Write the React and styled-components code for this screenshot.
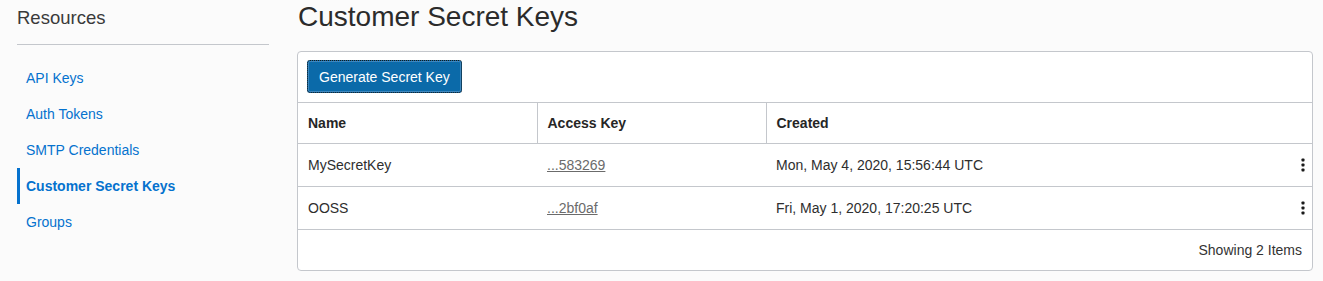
import React from 'react';
import styled, { createGlobalStyle } from 'styled-components';

const GlobalStyle = createGlobalStyle`
  html, body {
    margin: 0;
    padding: 0;
    background: #fbfbfb;
    font-family: "Liberation Sans", Arial, Helvetica, sans-serif;
    color: #333333;
  }
`;

const Page = styled.div`
  display: flex;
  gap: 28px;
  padding: 0 10px 0 17px;
`;

const Sidebar = styled.aside`
  width: 252px;
  flex: none;
`;

const SidebarTitle = styled.h2`
  margin: 0;
  padding-top: 6px;
  font-size: 18.5px;
  line-height: 24px;
  font-weight: 400;
  color: #3a3a3a;
`;

const Divider = styled.hr`
  margin: 14px 0 15px;
  border: 0;
  border-top: 1px solid #c4c7cc;
`;

const NavList = styled.ul`
  list-style: none;
  margin: 0;
  padding: 0;
`;

const NavItem = styled.li`
  display: flex;
  align-items: center;
  height: 36px;
  padding-left: 6px;
  border-left: 3px solid ${(p) => (p.$active ? '#0572ce' : 'transparent')};
  font-size: 14px;
  font-weight: ${(p) => (p.$active ? 700 : 400)};
  color: #0572ce;
`;

const Main = styled.main`
  flex: 1;
  min-width: 0;
`;

const Title = styled.h1`
  margin: 0 0 17px 1px;
  font-size: 28px;
  line-height: 34px;
  font-weight: 400;
  color: #2b2b2b;
`;

const Panel = styled.section`
  background: #ffffff;
  border: 1px solid #c4c7cc;
  border-radius: 4px;
  overflow: hidden;
`;

const Toolbar = styled.div`
  display: flex;
  padding: 8px 9px 9px;
`;

const Button = styled.button`
  height: 33px;
  padding: 0 11px;
  background: #0b6aa9;
  color: #ffffff;
  border: 1px dotted #1a1a1a;
  border-radius: 3px;
  box-shadow: inset 0 0 0 1px #3f87bd;
  font-family: inherit;
  font-size: 14px;
`;

const Table = styled.table`
  width: 100%;
  border-collapse: collapse;
  table-layout: fixed;
  font-size: 14px;
`;

const HeadCell = styled.th`
  height: 40px;
  padding: 0 10px;
  text-align: left;
  font-weight: 700;
  color: #262626;
  border-top: 1px solid #c4c7cc;
  border-bottom: 1px solid #c4c7cc;
  & + & {
    border-left: 1px solid #c4c7cc;
  }
`;

const Cell = styled.td`
  height: 42px;
  padding: 0 10px;
  color: #2e2e2e;
  border-bottom: 1px solid #c4c7cc;
`;

const CellInner = styled.div`
  display: flex;
  align-items: center;
  justify-content: space-between;
`;

const KeyLink = styled.a`
  color: #6b6b6b;
  text-decoration: underline;
`;

const Kebab = styled.button`
  display: flex;
  padding: 0;
  margin-right: -3px;
  border: 0;
  background: none;
`;

const Footer = styled.div`
  height: 40px;
  display: flex;
  align-items: center;
  justify-content: flex-end;
  padding: 0 10px;
  font-size: 14px;
  color: #333333;
`;

const KebabIcon = () => (
  <svg width="4" height="14" viewBox="0 0 4 14">
    <rect x="0.5" y="0.5" width="3" height="3" rx="0.8" fill="#1a1a1a" />
    <rect x="0.5" y="5.5" width="3" height="3" rx="0.8" fill="#1a1a1a" />
    <rect x="0.5" y="10.5" width="3" height="3" rx="0.8" fill="#1a1a1a" />
  </svg>
);

const navItems = ['API Keys', 'Auth Tokens', 'SMTP Credentials', 'Customer Secret Keys', 'Groups'];

const keys = [
  { name: 'MySecretKey', key: '...583269', created: 'Mon, May 4, 2020, 15:56:44 UTC' },
  { name: 'OOSS', key: '...2bf0af', created: 'Fri, May 1, 2020, 17:20:25 UTC' },
];

export default function App() {
  return (
    <>
      <GlobalStyle />
      <Page>
        <Sidebar>
          <SidebarTitle>Resources</SidebarTitle>
          <Divider />
          <NavList>
            {navItems.map((item) => (
              <NavItem key={item} $active={item === 'Customer Secret Keys'}>
                {item}
              </NavItem>
            ))}
          </NavList>
        </Sidebar>
        <Main>
          <Title>Customer Secret Keys</Title>
          <Panel>
            <Toolbar>
              <Button>Generate Secret Key</Button>
            </Toolbar>
            <Table>
              <colgroup>
                <col style={{ width: 239 }} />
                <col style={{ width: 229 }} />
                <col />
              </colgroup>
              <thead>
                <tr>
                  <HeadCell>Name</HeadCell>
                  <HeadCell>Access Key</HeadCell>
                  <HeadCell>Created</HeadCell>
                </tr>
              </thead>
              <tbody>
                {keys.map((k) => (
                  <tr key={k.name}>
                    <Cell>{k.name}</Cell>
                    <Cell>
                      <KeyLink>{k.key}</KeyLink>
                    </Cell>
                    <Cell>
                      <CellInner>
                        <span>{k.created}</span>
                        <Kebab aria-label="Actions">
                          <KebabIcon />
                        </Kebab>
                      </CellInner>
                    </Cell>
                  </tr>
                ))}
              </tbody>
            </Table>
            <Footer>Showing 2 Items</Footer>
          </Panel>
        </Main>
      </Page>
    </>
  );
}
